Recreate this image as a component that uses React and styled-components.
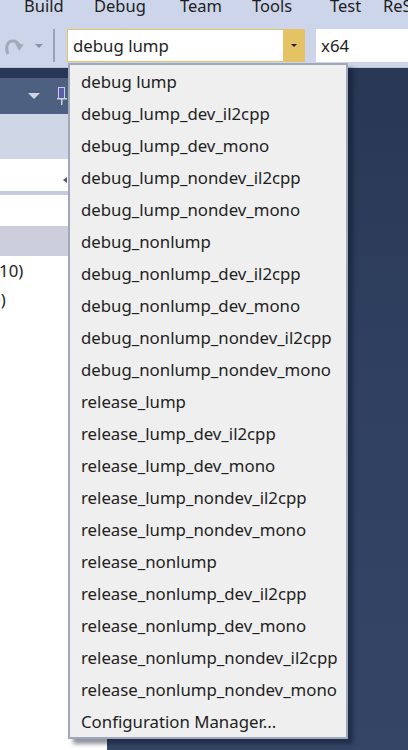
import React from "react";
import styled, { createGlobalStyle } from "styled-components";

const Global = createGlobalStyle`
  html, body { margin: 0; padding: 0; }
  body { font-family: "Noto Sans", "Segoe UI", sans-serif; }
`;

const Frame = styled.div`
  position: relative;
  width: 408px;
  height: 750px;
  overflow: hidden;
  background: #ccd5e9;
  display: flex;
  flex-direction: column;
  font-family: "Noto Sans", sans-serif;
  color: #1e1e1e;
`;

const MenuBar = styled.div`
  height: 24px;
  flex: none;
  display: flex;
  overflow: hidden;
  padding-left: 24px;
`;

const MenuItem = styled.div`
  font-size: 16.5px;
  line-height: 20px;
  margin-top: -4px;
  width: ${(p) => p.$w}px;
  flex: none;
  white-space: nowrap;
`;

const Toolbar = styled.div`
  height: 43px;
  flex: none;
  display: flex;
  align-items: flex-start;
  padding-top: 5px;
  box-sizing: border-box;
`;

const IconSlot = styled.div`
  width: ${(p) => p.$w}px;
  height: 33px;
  flex: none;
  display: flex;
  align-items: center;
  justify-content: center;
`;

const Separator = styled.div`
  width: 2px;
  height: 33px;
  background: #9aa2b4;
  flex: none;
  margin: 0 12px 0 3px;
`;

const Combo = styled.div`
  width: 238px;
  height: 33px;
  box-sizing: border-box;
  border: 1px solid #e5c365;
  background: #fff;
  display: flex;
  flex: none;
`;

const ComboText = styled.div`
  flex: 1;
  font-size: 16.8px;
  padding-left: 5px;
  display: flex;
  align-items: center;
`;

const ComboButton = styled.div`
  width: 21px;
  background: #e5c365;
  display: flex;
  align-items: center;
  justify-content: center;
`;

const Triangle = styled.div`
  width: 0;
  height: 0;
  border-left: ${(p) => p.$s}px solid transparent;
  border-right: ${(p) => p.$s}px solid transparent;
  border-top: ${(p) => p.$s}px solid ${(p) => p.$c};
`;

const PlatformBox = styled.div`
  margin-left: 11px;
  flex: 1;
  height: 33px;
  background: #fff;
  font-size: 16.8px;
  padding-left: 5px;
  display: flex;
  align-items: center;
`;

const Body = styled.div`
  flex: 1;
  display: flex;
  background: linear-gradient(180deg, #283753 0%, #2f3f5f 40%, #344566 100%);
  padding-top: 10px;
  border-top: 1px solid #b9c3d8;
`;

const LeftPanel = styled.div`
  width: 107px;
  flex: none;
  background: #fff;
  display: flex;
  flex-direction: column;
`;

const PanelHeader = styled.div`
  height: 36px;
  background: #4d6082;
  display: flex;
  align-items: center;
  padding-left: 28px;
  gap: 16px;
`;

const PanelTools = styled.div`
  height: 45px;
  background: #cfd6e5;
`;

const SearchBox = styled.div`
  height: 32px;
  background: #fff;
  display: flex;
  align-items: flex-end;
  padding-bottom: 8px;
  box-sizing: border-box;
  padding-left: 63px;
`;

const SearchArrow = styled.div`
  width: 0;
  height: 0;
  border-top: 3px solid transparent;
  border-bottom: 3px solid transparent;
  border-right: 4px solid #505a6c;
`;

const Divider = styled.div`
  height: 4px;
  background: #c4cbdb;
`;

const TreeRow = styled.div`
  height: ${(p) => p.$h}px;
  background: ${(p) => (p.$sel ? "#cccedb" : "#fff")};
  font-size: 16.8px;
  display: flex;
  align-items: center;
  white-space: nowrap;
  overflow: hidden;
`;

const TreeText = styled.span`
  margin-left: ${(p) => p.$off}px;
`;

const DocArea = styled.div`
  flex: 1;
`;

const Popup = styled.div`
  position: absolute;
  left: 68px;
  top: 63px;
  width: 280px;
  box-sizing: border-box;
  border: 2px solid #9ea8ba;
  background: #efefef;
  box-shadow: 5px 5px 4px rgba(10, 20, 40, 0.45);
  display: flex;
  flex-direction: column;
`;

const Option = styled.div`
  height: 32px;
  padding-left: 11px;
  font-size: 16.8px;
  display: flex;
  align-items: center;
  white-space: nowrap;
  color: #1e1e1e;
`;

const menu = [
  ["Build", 70],
  ["Debug", 86],
  ["Team", 72],
  ["Tools", 78],
  ["Test", 53],
  ["ReSharper", 80],
];

const options = [
  "debug lump",
  "debug_lump_dev_il2cpp",
  "debug_lump_dev_mono",
  "debug_lump_nondev_il2cpp",
  "debug_lump_nondev_mono",
  "debug_nonlump",
  "debug_nonlump_dev_il2cpp",
  "debug_nonlump_dev_mono",
  "debug_nonlump_nondev_il2cpp",
  "debug_nonlump_nondev_mono",
  "release_lump",
  "release_lump_dev_il2cpp",
  "release_lump_dev_mono",
  "release_lump_nondev_il2cpp",
  "release_lump_nondev_mono",
  "release_nonlump",
  "release_nonlump_dev_il2cpp",
  "release_nonlump_dev_mono",
  "release_nonlump_nondev_il2cpp",
  "release_nonlump_nondev_mono",
  "Configuration Manager...",
];

function RedoIcon() {
  return (
    <svg width="22" height="20" viewBox="0 0 22 20">
      <path
        d="M5 18 C2 12, 4 5, 10 5 C13 5, 15 7, 16 9"
        fill="none"
        stroke="#a3abba"
        strokeWidth="3"
      />
      <polygon points="11,10 19,6 19,14" fill="#a3abba" transform="rotate(35 16 10)" />
    </svg>
  );
}

function PinIcon() {
  return (
    <svg width="12" height="18" viewBox="0 0 12 18">
      <rect x="2.5" y="0.5" width="6" height="11" fill="#5a5aa8" stroke="#c9cfdc" />
      <rect x="1" y="11" width="10" height="1.5" fill="#c9cfdc" />
      <rect x="5" y="12" width="1.5" height="6" fill="#c9cfdc" />
    </svg>
  );
}

export default function App() {
  return (
    <>
      <Global />
      <Frame>
        <MenuBar>
          {menu.map(([m, w]) => (
            <MenuItem key={m} $w={w}>
              {m}
            </MenuItem>
          ))}
        </MenuBar>
        <Toolbar>
          <IconSlot $w={28}>
            <RedoIcon />
          </IconSlot>
          <IconSlot $w={22}>
            <Triangle $s={4} $c="#8a92a4" />
          </IconSlot>
          <Separator />
          <Combo>
            <ComboText>debug lump</ComboText>
            <ComboButton>
              <Triangle $s={3.5} $c="#1e1e1e" />
            </ComboButton>
          </Combo>
          <PlatformBox>x64</PlatformBox>
        </Toolbar>
        <Body>
          <LeftPanel>
            <PanelHeader>
              <Triangle $s={6} $c="#ced4e2" />
              <PinIcon />
            </PanelHeader>
            <PanelTools />
            <SearchBox>
              <SearchArrow />
            </SearchBox>
            <Divider />
            <TreeRow $h={31} />
            <TreeRow $h={30} $sel />
            <TreeRow $h={29}>
              <TreeText $off={-6}>(10)</TreeText>
            </TreeRow>
            <TreeRow $h={29}>
              <TreeText $off={-14}>(0)</TreeText>
            </TreeRow>
          </LeftPanel>
          <DocArea />
        </Body>
        <Popup>
          {options.map((o) => (
            <Option key={o}>{o}</Option>
          ))}
        </Popup>
      </Frame>
    </>
  );
}
